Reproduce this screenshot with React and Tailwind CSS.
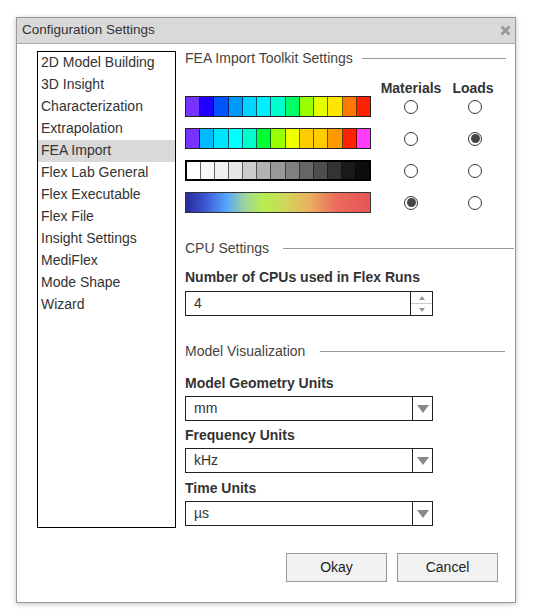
import React from 'react';

const sections = [
  '2D Model Building',
  '3D Insight',
  'Characterization',
  'Extrapolation',
  'FEA Import',
  'Flex Lab General',
  'Flex Executable',
  'Flex File',
  'Insight Settings',
  'MediFlex',
  'Mode Shape',
  'Wizard',
];

// colour maps, one per row
const palettes = [
  ['#7733ff', '#2200ff', '#0055ff', '#0099ff', '#00d5ff', '#00eeff', '#00ffcc', '#00ff66', '#99ff00', '#e5ff00', '#ffe500', '#ff7700', '#ff2200'],
  ['#7733ff', '#00bbff', '#00e5ff', '#00ffff', '#00ffcc', '#00ff33', '#99ff00', '#f2ff00', '#ffcc00', '#ffcc00', '#ff9900', '#ff2200', '#ff3dff'],
  ['#ffffff', '#f8f8f8', '#f0f0f0', '#e6e6e6', '#cccccc', '#b2b2b2', '#999999', '#808080', '#666666', '#4d4d4d', '#333333', '#1a1a1a', '#0d0d0d'],
];

const rows = [
  { material: false, load: false },
  { material: false, load: true },
  { material: false, load: false },
  { material: true, load: false },
];

function Radio({ checked }) {
  return (
    <span className="flex h-[14px] w-[14px] items-center justify-center rounded-full border border-[#333] bg-white">
      {checked && <span className="h-[9px] w-[9px] rounded-full bg-[#444]" />}
    </span>
  );
}

function ColorBar({ index }) {
  if (index === 3) {
    return (
      <div className="h-[21px] w-[186px] border border-[#333] bg-[linear-gradient(to_right,#2a2a9c_0%,#3b55d0_10%,#56a4ff_22%,#9fd49a_32%,#b6ee50_42%,#d2d45a_55%,#eaaf60_67%,#ea6a5c_82%,#e85458_100%)]" />
    );
  }
  return (
    <div className={`flex h-[21px] w-[186px] ${index === 2 ? 'border-2 border-black' : 'border border-[#222]'}`}>
      {palettes[index].map((c, i) => (
        <span
          key={i}
          className="h-full flex-1 border-r border-black/60 last:border-r-0"
          style={{ backgroundColor: c }}
        />
      ))}
    </div>
  );
}

function GroupHeading({ title, gap, right }) {
  return (
    <div className="flex items-center text-[14px] leading-[17px] text-[#444]">
      <span>{title}</span>
      <span className={`h-px flex-1 bg-[#999] ${gap} ${right}`} />
    </div>
  );
}

function Select({ value }) {
  return (
    <div className="flex h-[25px] w-[248px] border border-[#222] bg-white">
      <span className="flex-1 pl-[8px] text-[14px] leading-[23px] text-[#333]">{value}</span>
      <span className="flex w-[20px] items-center justify-center border-l border-[#222]">
        <svg width="12" height="8" viewBox="0 0 12 8">
          <path d="M0 0 H12 L6 8 Z" fill="#888" />
        </svg>
      </span>
    </div>
  );
}

export default function App() {
  return (
    <div className="min-h-[613px] bg-white pl-[16px] pt-[17px] font-['Liberation_Sans',Arial,sans-serif]">
      <div className="flex h-[586px] w-[500px] flex-col border border-[#999] bg-white shadow-[0_1px_5px_rgba(0,0,0,0.25)]">
        {/* Title bar */}
        <div className="flex h-[26px] items-center justify-between border-b border-[#aaa] bg-[#d9d9d9] pl-[5px] pr-[4px]">
          <span className="text-[13.5px] text-[#333]">Configuration Settings</span>
          <svg width="11" height="11" viewBox="0 0 11 11">
            <path d="M1.5 1.5 L9.5 9.5 M9.5 1.5 L1.5 9.5" stroke="#9a9a9a" strokeWidth="3" />
          </svg>
        </div>

        <div className="flex pl-[20px] pt-[6px]">
          {/* Section list */}
          <div className="mt-[1px] h-[477px] w-[139px] border border-black">
            {sections.map((s) => (
              <div
                key={s}
                className={`h-[22px] pl-[3px] text-[14px] leading-[21px] text-[#333] ${s === 'FEA Import' ? 'bg-[#d9d9d9]' : ''}`}
              >
                {s}
              </div>
            ))}
          </div>

          {/* Settings panel */}
          <div className="ml-[9px] flex-1">
            <GroupHeading title="FEA Import Toolkit Settings" gap="ml-[9px]" right="mr-[9px]" />

            <div className="mt-[13px] flex h-[16px] text-[14px] font-bold leading-[16px] text-[#333]">
              <span className="w-[195px]" />
              <span className="w-[62px] text-center">Materials</span>
              <span className="w-[62px] text-center">Loads</span>
            </div>

            <div className="flex flex-col gap-[11px]">
              {rows.map((r, i) => (
                <div key={i} className="flex items-center">
                  <ColorBar index={i} />
                  <span className="ml-[9px] flex w-[62px] justify-center">
                    <Radio checked={r.material} />
                  </span>
                  <span className="flex w-[66px] justify-center">
                    <Radio checked={r.load} />
                  </span>
                </div>
              ))}
            </div>

            <div className="mt-[27px]">
              <GroupHeading title="CPU Settings" gap="ml-[14px]" right="mr-[1px]" />
            </div>

            <div className="mt-[12px] text-[14px] font-bold leading-[17px] text-[#333]">
              Number of CPUs used in Flex Runs
            </div>
            <div className="mt-[5px] flex h-[25px] w-[248px] border border-[#222] bg-white">
              <span className="flex-1 pl-[8px] text-[14px] leading-[23px] text-[#333]">4</span>
              <span className="flex w-[22px] flex-col border-l border-[#222]">
                <span className="flex flex-1 items-center justify-center border-b border-[#ccc]">
                  <svg width="6" height="4" viewBox="0 0 6 4">
                    <path d="M0 4 H6 L3 0 Z" fill="#999" />
                  </svg>
                </span>
                <span className="flex flex-1 items-center justify-center">
                  <svg width="6" height="4" viewBox="0 0 6 4">
                    <path d="M0 0 H6 L3 4 Z" fill="#999" />
                  </svg>
                </span>
              </span>
            </div>

            <div className="mt-[27px]">
              <GroupHeading title="Model Visualization" gap="ml-[15px]" right="mr-[10px]" />
            </div>

            <div className="mt-[15px] text-[14px] font-bold leading-[17px] text-[#333]">Model Geometry Units</div>
            <div className="mt-[4px]">
              <Select value="mm" />
            </div>
            <div className="mt-[6px] text-[14px] font-bold leading-[17px] text-[#333]">Frequency Units</div>
            <div className="mt-[4px]">
              <Select value="kHz" />
            </div>
            <div className="mt-[7px] text-[14px] font-bold leading-[17px] text-[#333]">Time Units</div>
            <div className="mt-[4px]">
              <Select value="µs" />
            </div>
          </div>
        </div>

        {/* Footer */}
        <div className="mt-[25px] flex justify-end gap-[10px] pr-[17px]">
          <button className="h-[29px] w-[101px] border border-[#999] bg-[#f2f2f2] text-[14px] text-[#222]">
            Okay
          </button>
          <button className="h-[29px] w-[101px] border border-[#999] bg-[#f2f2f2] text-[14px] text-[#222]">
            Cancel
          </button>
        </div>
      </div>
    </div>
  );
}
